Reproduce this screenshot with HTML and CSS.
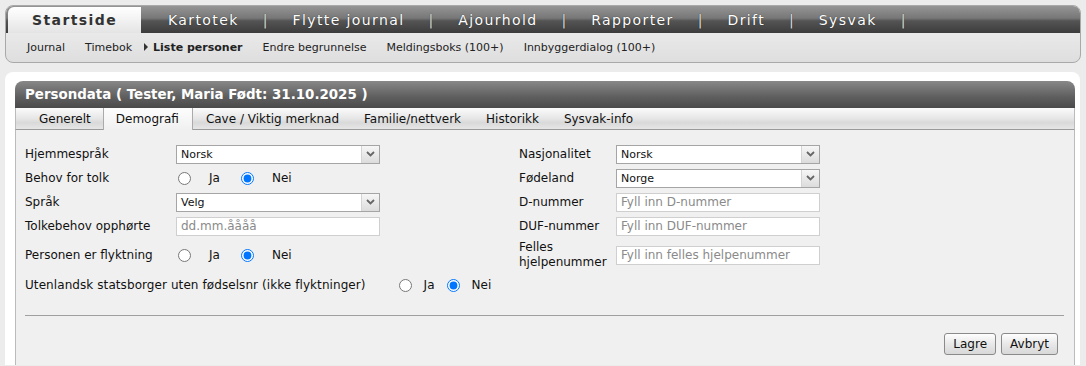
FILE: index.html
```html
<!DOCTYPE html>
<html lang="no">
<head>
    <meta charset="UTF-8">
    <title>Persondata</title>
    <link rel="stylesheet" href="styles.css">
</head>
<body>

<div class="topnav">
    <ul class="mainmenu">
        <li class="active">Startside</li>
        <li>Kartotek</li>
        <li class="sep">|</li>
        <li>Flytte journal</li>
        <li class="sep">|</li>
        <li>Ajourhold</li>
        <li class="sep">|</li>
        <li>Rapporter</li>
        <li class="sep">|</li>
        <li>Drift</li>
        <li class="sep">|</li>
        <li>Sysvak</li>
        <li class="sep">|</li>
    </ul>
    <ul class="submenu">
        <li>Journal</li>
        <li>Timebok</li>
        <li class="current"><span class="arrow"></span>Liste personer</li>
        <li>Endre begrunnelse</li>
        <li>Meldingsboks (100+)</li>
        <li>Innbyggerdialog (100+)</li>
    </ul>
</div>

<div class="panel">
    <div class="panel-header">Persondata ( Tester, Maria Født: 31.10.2025 )</div>
    <ul class="tabs">
        <li>Generelt</li>
        <li class="active">Demografi</li>
        <li>Cave / Viktig merknad</li>
        <li>Familie/nettverk</li>
        <li>Historikk</li>
        <li>Sysvak-info</li>
    </ul>

    <div class="content">
        <div class="form-grid">
            <div class="col col-left">
                <div class="row">
                    <label>Hjemmespråk</label>
                    <div class="select"><span>Norsk</span><i class="drop"><svg width="9" height="6" viewBox="0 0 9 6"><path d="M1 1 L4.5 4.5 L8 1" fill="none" stroke="#666" stroke-width="1.8"/></svg></i></div>
                </div>
                <div class="row">
                    <label>Behov for tolk</label>
                    <div class="radios">
                        <input type="radio" name="tolk"><span>Ja</span>
                        <input type="radio" name="tolk" checked><span>Nei</span>
                    </div>
                </div>
                <div class="row">
                    <label>Språk</label>
                    <div class="select"><span>Velg</span><i class="drop"><svg width="9" height="6" viewBox="0 0 9 6"><path d="M1 1 L4.5 4.5 L8 1" fill="none" stroke="#666" stroke-width="1.8"/></svg></i></div>
                </div>
                <div class="row">
                    <label>Tolkebehov opphørte</label>
                    <input class="text" type="text" placeholder="dd.mm.åååå">
                </div>
                <div class="row tall">
                    <label>Personen er flyktning</label>
                    <div class="radios">
                        <input type="radio" name="flykt"><span>Ja</span>
                        <input type="radio" name="flykt" checked><span>Nei</span>
                    </div>
                </div>
            </div>

            <div class="col col-right">
                <div class="row">
                    <label>Nasjonalitet</label>
                    <div class="select"><span>Norsk</span><i class="drop"><svg width="9" height="6" viewBox="0 0 9 6"><path d="M1 1 L4.5 4.5 L8 1" fill="none" stroke="#666" stroke-width="1.8"/></svg></i></div>
                </div>
                <div class="row">
                    <label>Fødeland</label>
                    <div class="select"><span>Norge</span><i class="drop"><svg width="9" height="6" viewBox="0 0 9 6"><path d="M1 1 L4.5 4.5 L8 1" fill="none" stroke="#666" stroke-width="1.8"/></svg></i></div>
                </div>
                <div class="row">
                    <label>D-nummer</label>
                    <input class="text" type="text" placeholder="Fyll inn D-nummer">
                </div>
                <div class="row">
                    <label>DUF-nummer</label>
                    <input class="text" type="text" placeholder="Fyll inn DUF-nummer">
                </div>
                <div class="row tall">
                    <label>Felles hjelpenummer</label>
                    <input class="text" type="text" placeholder="Fyll inn felles hjelpenummer">
                </div>
            </div>
        </div>

        <div class="row wide">
            <label>Utenlandsk statsborger uten fødselsnr (ikke flyktninger)</label>
            <div class="radios">
                <input type="radio" name="utl"><span>Ja</span>
                <input type="radio" name="utl" checked><span>Nei</span>
            </div>
        </div>

        <hr class="divider">

        <div class="buttons">
            <button>Lagre</button>
            <button>Avbryt</button>
        </div>
    </div>
</div>

</body>
</html>
```

FILE: styles.css
```css
body {
    font-family: "DejaVu Sans", Verdana, sans-serif;
    font-size: 12px;
    color: #111;
    background-color: #ececec;
    margin: 0;
    padding: 5px 5px 0 5px;
}
ul {
    list-style: none;
    margin: 0;
    padding: 0;
}

/* top menu */
.topnav {
    width: 1074px;
    border: 1px solid #a9a9a9;
    border-radius: 8px;
    overflow: hidden;
    background: linear-gradient(#f4f4f4, #dedede);
}
.mainmenu {
    display: flex;
    height: 27px;
    background: linear-gradient(#959595, #777 45%, #545454 55%, #3c3c3c);
}
.mainmenu li {
    display: flex;
    align-items: center;
    color: #fff;
    font-size: 14px;
    letter-spacing: 1.4px;
    text-shadow: 0 0 1px #222;
}
.mainmenu li.sep {
    padding: 0 25px 0 24px;
    color: #ddd;
    letter-spacing: 0;
}
.mainmenu li.active {
    margin: 1px 0 0 2px;
    width: 133px;
    justify-content: center;
    font-weight: bold;
    color: #333;
    text-shadow: none;
    background: linear-gradient(#ffffff, #f2f2f2 50%, #e4e4e4);
    border-radius: 6px 0 0 0;
    margin-right: 27px;
}
.submenu {
    display: flex;
    align-items: center;
    height: 29px;
    padding-left: 21px;
    gap: 20px;
    font-size: 11px;
    color: #222;
}
.submenu li.current {
    font-weight: bold;
    margin-left: -8px;
}
.submenu .arrow {
    display: inline-block;
    width: 0;
    height: 0;
    border-left: 4px solid #333;
    border-top: 4px solid transparent;
    border-bottom: 4px solid transparent;
    margin-right: 5px;
}

/* panel */
.panel {
    margin-top: 9px;
    width: 1060px;
    background-color: #fff;
    border-radius: 8px 8px 0 0;
    padding: 9px 5px 0 10px;
}
.panel-header {
    height: 27px;
    line-height: 27px;
    padding-left: 10px;
    color: #fff;
    font-weight: bold;
    font-size: 13.4px;
    background: linear-gradient(#888, #5e5e5e 60%, #4a4a4a);
    border-radius: 8px 8px 0 0;
}
.tabs {
    display: flex;
    height: 21px;
    padding-left: 10px;
    border-left: 1px solid #bbb;
    border-right: 1px solid #bbb;
    border-bottom: 1px solid #9a9a9a;
    background: linear-gradient(#fbfbfb, #e6e6e6 50%, #d9d9d9 70%, #e6e6e6);
}
.tabs li {
    display: flex;
    align-items: center;
    padding: 0 12px 0 13px;
    color: #111;
}
.tabs li.active {
    background: linear-gradient(#fdfdfd, #f0f0f0);
    border-left: 1px solid #aaa;
    border-right: 1px solid #aaa;
    margin-bottom: -1px;
    padding: 0 13px 0 12px;
}
.content {
    background-color: #f0f0f0;
    border-left: 1px solid #bbb;
    border-right: 1px solid #bbb;
    padding: 12px 10px 10px 9px;
}

/* form */
.form-grid {
    display: flex;
}
.col-left {
    width: 494px;
}
.row {
    display: flex;
    align-items: center;
    height: 24px;
}
.row.tall {
    height: 34px;
}
.row.wide {
    height: 26px;
}
.col-left label {
    width: 151px;
}
.col-right label {
    width: 97px;
    line-height: 15px;
}
.row.wide label {
    width: auto;
    margin-right: 31px;
    letter-spacing: 0.08px;
}
.select {
    position: relative;
    height: 17px;
    border: 1px solid #a5a5a5;
    background-color: #fff;
    font-size: 11px;
    display: flex;
    align-items: center;
    padding-left: 4px;
    box-sizing: content-box;
    width: 198px;
}
.select .drop {
    position: absolute;
    right: 0;
    top: 0;
    width: 17px;
    height: 17px;
    border-left: 1px solid #d4d4d4;
    background: linear-gradient(#f6f6f6, #dcdcdc);
    display: flex;
    align-items: center;
    justify-content: center;
}
input.text {
    width: 204px;
    height: 19px;
    box-sizing: border-box;
    border: 1px solid #cfcfcf;
    background-color: #fff;
    padding: 0 4px;
    font-family: "DejaVu Sans", Verdana, sans-serif;
    font-size: 12px;
    margin: 0;
}
input.text::placeholder {
    color: #8a8a8a;
}
.radios {
    display: flex;
    align-items: center;
}
.radios input {
    margin: 0 0 0 2px;
    width: 13px;
    height: 13px;
}
.radios span {
    margin: 0 19px 0 18px;
}
.row.wide .radios span {
    margin: 0 10px 0 12px;
}
.divider {
    border: none;
    border-top: 1px solid #a0a0a0;
    margin: 17px 0 17px 0;
}
.buttons {
    display: flex;
    justify-content: flex-end;
    gap: 5px;
    padding-right: 6px;
}
.buttons button {
    font-family: "DejaVu Sans", Verdana, sans-serif;
    font-size: 12px;
    height: 22px;
    padding: 0 8px;
    border: 1px solid #8a8a8a;
    border-radius: 3px;
    background: linear-gradient(#fefefe, #e8e8e8 50%, #d8d8d8);
    color: #111;
}
```
